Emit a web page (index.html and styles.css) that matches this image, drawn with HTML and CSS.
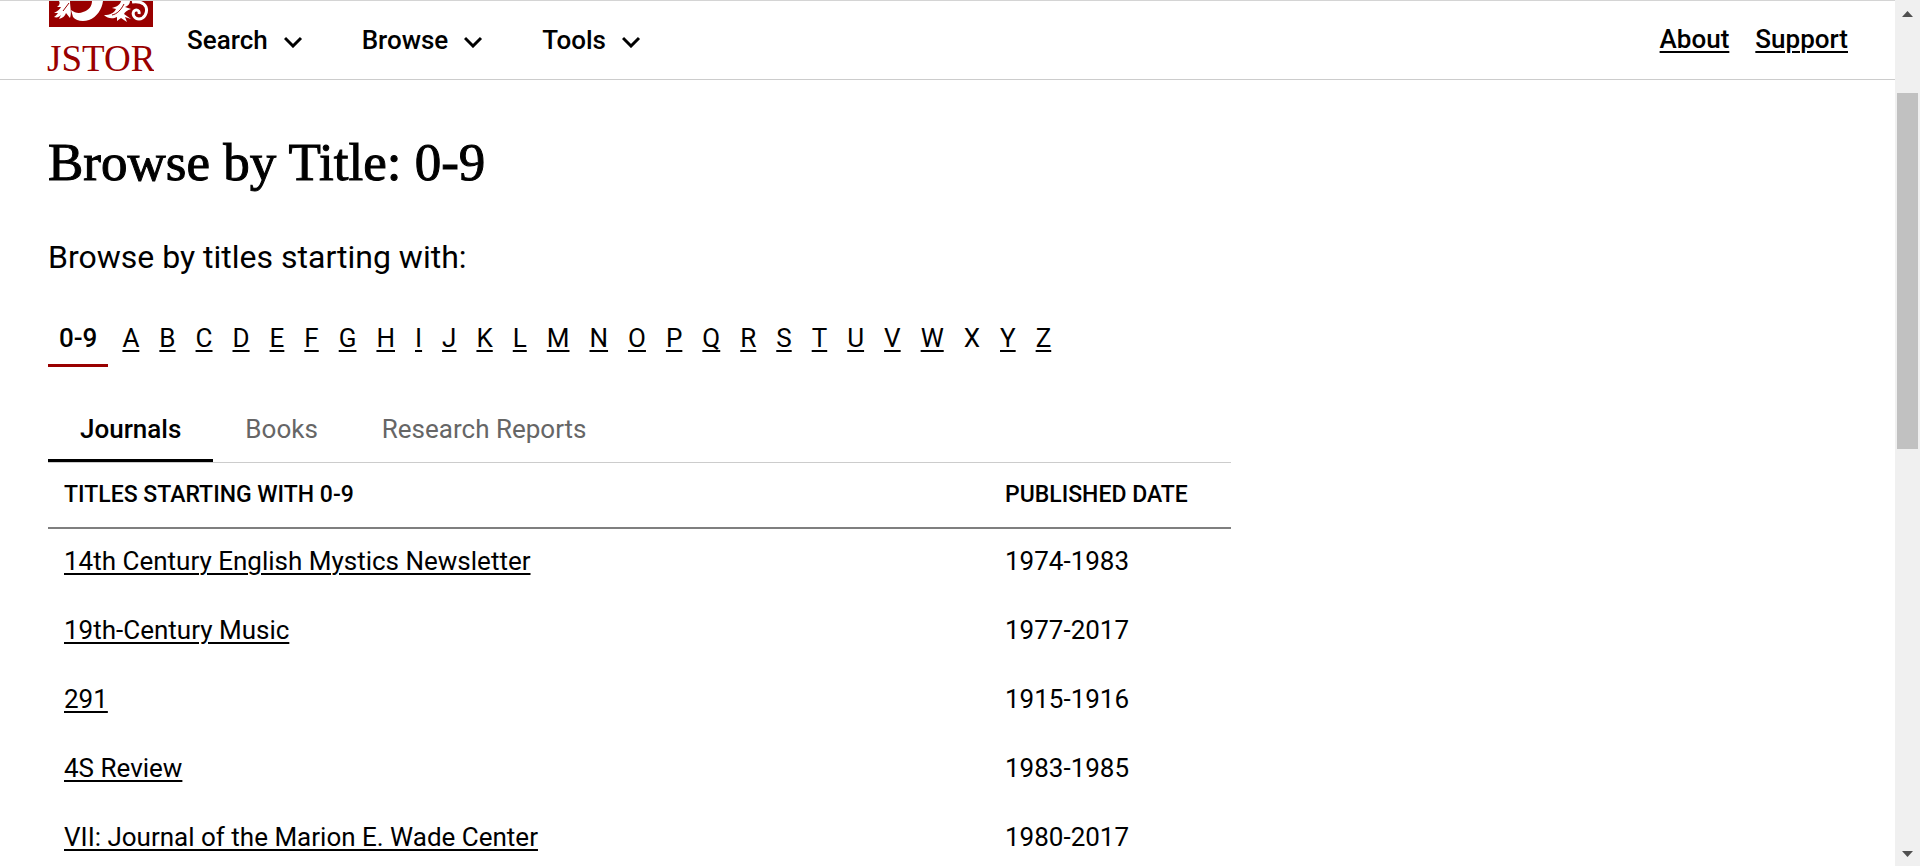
FILE: index.html
```
<!DOCTYPE html>
<html lang="en">
<head>
  <meta charset="UTF-8">
  <meta name="viewport" content="width=device-width, initial-scale=1.0">
  <title>Browse by Title: 0-9 on JSTOR</title>
  <link rel="stylesheet" href="styles.css">
</head>
<body>
  <div class="page">
    <header class="header">
      <a class="logo" href="#" aria-label="JSTOR home">
        <svg width="108" height="78" viewBox="0 0 108 78">
          <rect x="3" y="0" width="104" height="26" fill="#900"/>
          <g fill="#fff">
            <path d="M13 0L24 0C24 6 26 12 24 17L20 12C19 15 17 17 13 18L15 14C13 16 11 17 8 16C10 15 11 13 12 12L8 12C12 10 14 8 15 6L11 6C14 4 14 2 13 0z"/>
            <path d="M25 9C29 12 33 13 37 11C43 9 46 5 46 0H57C56 8 51 16 43 19C37 21 30 20 27 16z"/>
            <path d="M58 14C64 14 68 12 70 8L66 7C70 6 74 4 75 0H84C84 3 82 5 79 6L85 8C81 9 79 11 78 13L85 18L79 16L81 21L75 17L71 20L71 16C67 18 62 18 58 14z"/>
          </g>
          <path d="M26 0C27 4 29 7 33 7M17 10L23 2M66 14C71 13 75 9 78 3" fill="none" stroke="#900" stroke-width="1"/>
          <path d="M86 1C91 0 98 1 100 6C102 12 98 18 93 18C88 18 86 13 88 10C90 8 94 9 93 13" fill="none" stroke="#fff" stroke-width="3"/>
          <text class="logo-text" x="1" y="70">JSTOR</text>
        </svg>
      </a>
      <nav class="nav">
        <button class="nav-button" type="button">Search
          <svg class="chevron" width="19" height="12" viewBox="0 0 19 12"><path d="M1 2l8 8 8-8"/></svg>
        </button>
        <button class="nav-button" type="button">Browse
          <svg class="chevron" width="19" height="12" viewBox="0 0 19 12"><path d="M1 2l8 8 8-8"/></svg>
        </button>
        <button class="nav-button" type="button">Tools
          <svg class="chevron" width="19" height="12" viewBox="0 0 19 12"><path d="M1 2l8 8 8-8"/></svg>
        </button>
      </nav>
      <div class="header-links">
        <a href="#">About</a>
        <a href="#">Support</a>
      </div>
    </header>

    <main class="content">
      <h1>Browse by Title: 0-9</h1>
      <p class="intro">Browse by titles starting with:</p>

      <nav class="letters" aria-label="Titles by letter">
        <span class="current">0-9</span>
        <a href="#">A</a>
        <a href="#">B</a>
        <a href="#">C</a>
        <a href="#">D</a>
        <a href="#">E</a>
        <a href="#">F</a>
        <a href="#">G</a>
        <a href="#">H</a>
        <a href="#">I</a>
        <a href="#">J</a>
        <a href="#">K</a>
        <a href="#">L</a>
        <a href="#">M</a>
        <a href="#">N</a>
        <a href="#">O</a>
        <a href="#">P</a>
        <a href="#">Q</a>
        <a href="#">R</a>
        <a href="#">S</a>
        <a href="#">T</a>
        <a href="#">U</a>
        <a href="#">V</a>
        <a href="#">W</a>
        <span>X</span>
        <a href="#">Y</a>
        <a href="#">Z</a>
      </nav>

      <section class="results">
        <div class="tabs" role="tablist">
          <button class="tab active" type="button" role="tab" aria-selected="true">Journals</button>
          <button class="tab" type="button" role="tab" aria-selected="false">Books</button>
          <button class="tab" type="button" role="tab" aria-selected="false">Research Reports</button>
        </div>
        <table class="titles">
          <thead>
            <tr>
              <th scope="col">Titles starting with 0-9</th>
              <th class="date" scope="col">Published Date</th>
            </tr>
          </thead>
          <tbody>
            <tr>
              <td><a href="#">14th Century English Mystics Newsletter</a></td>
              <td>1974-1983</td>
            </tr>
            <tr>
              <td><a href="#">19th-Century Music</a></td>
              <td>1977-2017</td>
            </tr>
            <tr>
              <td><a href="#">291</a></td>
              <td>1915-1916</td>
            </tr>
            <tr>
              <td><a href="#">4S Review</a></td>
              <td>1983-1985</td>
            </tr>
            <tr>
              <td><a href="#">VII: Journal of the Marion E. Wade Center</a></td>
              <td>1980-2017</td>
            </tr>
          </tbody>
        </table>
      </section>
    </main>
  </div>

  <div class="scrollbar" aria-hidden="true">
    <svg width="11" height="6" viewBox="0 0 11 6"><path d="M0 6L5.500 0L11 6z" fill="#505050"/></svg>
    <div class="track"><div class="thumb"></div></div>
    <svg width="11" height="6" viewBox="0 0 11 6"><path d="M0 0L5.500 6L11 0z" fill="#505050"/></svg>
  </div>
</body>
</html>
```
FILE: styles.css
```
* {
  box-sizing: border-box;
}

body {
  font-family: Roboto, "Liberation Sans", sans-serif;
  font-size: 26px;
  line-height: 32px;
  margin: 0;
  color: #000;
  background: #fff;
  display: flex;
  height: 100vh;
  overflow: hidden;
}

a {
  color: #000;
  text-decoration-thickness: 2px;
  text-underline-offset: 3px;
}

button {
  font: inherit;
  color: #000;
  background: none;
  border: none;
  padding: 0;
  cursor: pointer;
}

.page {
  flex: 1;
  min-width: 0;
}

.header {
  display: flex;
  align-items: center;
  height: 80px;
  padding: 0 47px 0 46px;
  border-top: 1px solid #d4d4d4;
  border-bottom: 1px solid #ccc;
  font-weight: 500;
}

.logo svg {
  display: block;
}

.logo-text {
  font-family: "Liberation Serif", serif;
  font-size: 37px;
  fill: #900;
}

.nav {
  display: flex;
  gap: 59px;
  margin-left: 33px;
}

.nav-button {
  display: flex;
  align-items: center;
  gap: 16px;
}

.chevron {
  margin-top: 4px;
  fill: none;
  stroke: #000;
  stroke-width: 3;
}

.header-links {
  display: flex;
  gap: 26px;
  margin-left: auto;
  padding-bottom: 2px;
}

.content {
  padding: 48px;
}

h1 {
  margin: 4px 0 45px;
  font-family: "Liberation Serif", serif;
  font-size: 53px;
  font-weight: 400;
  line-height: 60px;
  -webkit-text-stroke: 1px #000;
}

.intro {
  margin: 0 0 41px;
  font-size: 32px;
  line-height: 40px;
}

.letters {
  display: flex;
  flex-wrap: wrap;
  gap: 20px;
  line-height: 40px;
}

.letters .current {
  padding: 0 11px 6px;
  margin-right: -6px;
  font-weight: 500;
  border-bottom: 3px solid #900;
}

.results {
  max-width: 1183px;
  margin-top: 39px;
}

.tabs {
  display: flex;
  border-bottom: 1px solid #ccc;
}

.tab {
  padding: 7px 32px 14px;
  color: #666;
  border-bottom: 3px solid transparent;
}

.tab.active {
  color: #000;
  font-weight: 500;
  border-color: #000;
}

.titles {
  width: 100%;
  border-collapse: collapse;
  text-align: left;
}

.titles th {
  height: 65px;
  padding: 0 16px;
  font-size: 23px;
  font-weight: 500;
  text-transform: uppercase;
  border-bottom: 2px solid #7f7f7f;
}

.titles .date {
  width: 242px;
}

.titles td {
  height: 69px;
  padding: 0 16px 4px;
}

.scrollbar {
  display: flex;
  flex-direction: column;
  align-items: center;
  width: 25px;
  padding: 11px 0 9px;
  background: #f0f0f0;
}

.track {
  flex: 1;
  width: 21px;
  padding: 76px 0 0;
}

.thumb {
  height: 47%;
  background: #c1c1c1;
}
```
